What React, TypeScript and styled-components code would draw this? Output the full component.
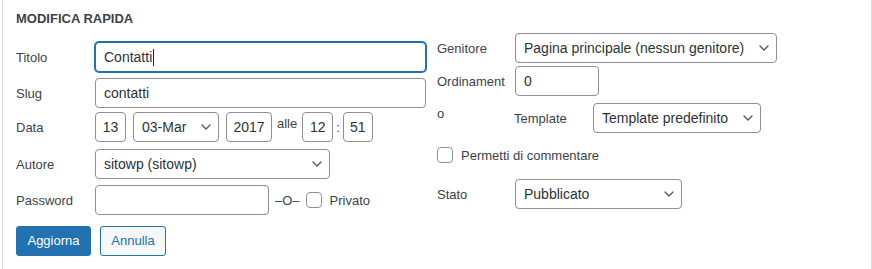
import styled, { createGlobalStyle } from "styled-components";

const GlobalStyle = createGlobalStyle`
  html, body {
    margin: 0;
    padding: 0;
    background: #ffffff;
  }
  body {
    font-family: "Liberation Sans", Arial, sans-serif;
    color: #3c434a;
  }
`;

const Chevron = () => (
  <svg width="10" height="6" viewBox="0 0 10 6" fill="none">
    <path d="M1 1l4 4 4-4" stroke="#50575e" strokeWidth="1.3" strokeLinecap="round" strokeLinejoin="round" />
  </svg>
);

const App = () => {
  return (
    <>
      <GlobalStyle />
      <Panel>
        <LeftCol>
          <Legend>Modifica rapida</Legend>

          <Row $mt={7}>
            <Label>Titolo</Label>
            <TextBox $w={331} $focused>
              Contatti
              <Caret />
            </TextBox>
          </Row>

          <Row $mt={6}>
            <Label>Slug</Label>
            <TextBox $w={331}>contatti</TextBox>
          </Row>

          <Row $mt={4}>
            <Label>Data</Label>
            <DateGroup>
              <TextBox $w={31} $center>13</TextBox>
              <SelectBox $w={86}>
                03-Mar
                <Chevron />
              </SelectBox>
              <TextBox $w={46} $center>2017</TextBox>
              <Inline $raise>alle</Inline>
              <TimeGroup>
                <TextBox $w={31} $center>12</TextBox>
                <Inline>:</Inline>
                <TextBox $w={30} $center>51</TextBox>
              </TimeGroup>
            </DateGroup>
          </Row>

          <Row $mt={7}>
            <Label>Autore</Label>
            <SelectBox $w={235}>
              sitowp (sitowp)
              <Chevron />
            </SelectBox>
          </Row>

          <Row $mt={6}>
            <Label>Password</Label>
            <TextBox $w={174} />
            <Separator>–O–</Separator>
            <CheckBox />
            <CheckLabel>Privato</CheckLabel>
          </Row>

          <Actions>
            <PrimaryButton>Aggiorna</PrimaryButton>
            <SecondaryButton>Annulla</SecondaryButton>
          </Actions>
        </LeftCol>

        <RightCol>
          <Row $mt={0}>
            <Label $w={78}>Genitore</Label>
            <SelectBox $w={262}>
              Pagina principale (nessun genitore)
              <Chevron />
            </SelectBox>
          </Row>

          <Row $mt={3}>
            <Label $w={78}>Ordinament</Label>
            <TextBox $w={84}>0</TextBox>
          </Row>

          <Row $mt={7}>
            <Wrapped>o</Wrapped>
            <Label $w={79}>Template</Label>
            <SelectBox $w={168}>
              Template predefinito
              <Chevron />
            </SelectBox>
          </Row>

          <CheckRow>
            <CheckBox />
            <CheckLabel>Permetti di commentare</CheckLabel>
          </CheckRow>

          <Row $mt={14}>
            <Label $w={78}>Stato</Label>
            <SelectBox $w={167}>
              Pubblicato
              <Chevron />
            </SelectBox>
          </Row>
        </RightCol>
      </Panel>
    </>
  );
};

export default App;

const Panel = styled.div`
  display: flex;
  width: 855px;
  height: 269px;
  margin-left: 2px;
  padding-left: 13px;
  border-left: 1px solid #dcdcde;
  border-right: 1px solid #dcdcde;
  box-sizing: content-box;
`;

const LeftCol = styled.div`
  width: 421px;
  display: flex;
  flex-direction: column;
`;

const RightCol = styled.div`
  flex: 1;
  display: flex;
  flex-direction: column;
  padding-top: 33px;
`;

const Legend = styled.h4`
  margin: 0;
  padding-top: 3px;
  font-size: 13px;
  line-height: 32px;
  font-weight: 700;
  text-transform: uppercase;
  color: #3c434a;
`;

const Row = styled.div<{ $mt: number }>`
  display: flex;
  align-items: center;
  height: 30px;
  margin-top: ${(p) => p.$mt}px;
`;

const Label = styled.span<{ $w?: number }>`
  flex: none;
  width: ${(p) => p.$w ?? 79}px;
  font-size: 13px;
  color: #3c434a;
  white-space: nowrap;
`;

const Wrapped = styled.span`
  flex: none;
  width: 77px;
  align-self: flex-start;
  padding-top: 3px;
  font-size: 13px;
  color: #3c434a;
`;

const TextBox = styled.div<{ $w?: number; $focused?: boolean; $center?: boolean }>`
  box-sizing: border-box;
  display: flex;
  align-items: center;
  justify-content: ${(p) => (p.$center ? "center" : "flex-start")};
  width: ${(p) => p.$w ?? 100}px;
  height: 30px;
  padding: 0 ${(p) => (p.$center ? 0 : 8)}px;
  border: 1px solid ${(p) => (p.$focused ? "#2271b1" : "#8c8f94")};
  box-shadow: ${(p) => (p.$focused ? "0 0 0 1px #2271b1" : "none")};
  border-radius: 4px;
  background: #ffffff;
  font-size: 14px;
  color: #2c3338;
  white-space: nowrap;
`;

const Caret = styled.span`
  display: inline-block;
  width: 1px;
  height: 17px;
  margin-left: 1px;
  background: #1d2327;
`;

const SelectBox = styled.div<{ $w: number }>`
  box-sizing: border-box;
  display: flex;
  align-items: center;
  justify-content: space-between;
  width: ${(p) => p.$w}px;
  height: 30px;
  padding: 0 7px 0 8px;
  border: 1px solid #8c8f94;
  border-radius: 4px;
  background: #ffffff;
  font-size: 14px;
  color: #2c3338;
  white-space: nowrap;
`;

const DateGroup = styled.div`
  display: flex;
  align-items: center;
  gap: 7px;
`;

const TimeGroup = styled.div`
  display: flex;
  align-items: center;
  gap: 3px;
`;

const Inline = styled.span<{ $raise?: boolean }>`
  font-size: 13px;
  color: #3c434a;
  margin: ${(p) => (p.$raise ? "-8px -2px 0" : "0")};
`;

const Separator = styled.span`
  margin: 0 6px;
  font-size: 13px;
  color: #3c434a;
`;

const CheckBox = styled.span`
  box-sizing: border-box;
  flex: none;
  width: 16px;
  height: 16px;
  border: 1px solid #8c8f94;
  border-radius: 4px;
  background: #ffffff;
`;

const CheckLabel = styled.span`
  margin-left: 8px;
  font-size: 13px;
  color: #3c434a;
`;

const CheckRow = styled.div`
  display: flex;
  align-items: center;
  height: 20px;
  margin-top: 12px;
`;

const Actions = styled.div`
  display: flex;
  gap: 9px;
  margin-top: 11px;
`;

const ButtonBase = styled.button`
  box-sizing: border-box;
  height: 30px;
  padding: 0 10px;
  border-radius: 3px;
  font-family: "Liberation Sans", Arial, sans-serif;
  font-size: 13px;
  line-height: 28px;
  cursor: pointer;
`;

const PrimaryButton = styled(ButtonBase)`
  width: 75px;
  border: 1px solid #2271b1;
  background: #2271b1;
  color: #ffffff;
`;

const SecondaryButton = styled(ButtonBase)`
  width: 66px;
  border: 1px solid #2271b1;
  background: #f6f7f7;
  color: #2271b1;
`;
